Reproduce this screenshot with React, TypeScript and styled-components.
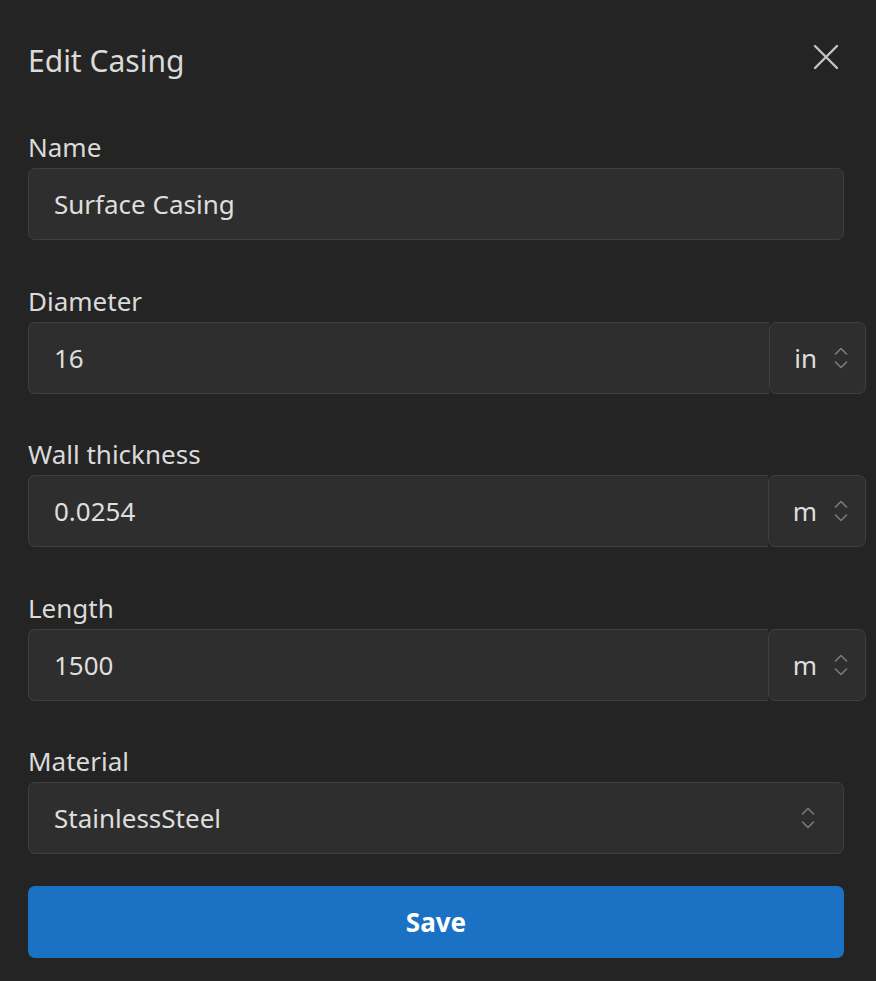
import React from "react";
import styled, { createGlobalStyle } from "styled-components";

const GlobalStyle = createGlobalStyle`
  html, body {
    margin: 0;
    background: #242424;
  }
  body {
    font-family: "Noto Sans", "Open Sans", sans-serif;
    color: #dcdcdc;
  }
`;

type Field = {
  label: string;
  value: string;
  unit?: string;
};

const fields: Field[] = [
  { label: "Name", value: "Surface Casing" },
  { label: "Diameter", value: "16", unit: "in" },
  { label: "Wall thickness", value: "0.0254", unit: "m" },
  { label: "Length", value: "1500", unit: "m" },
];

const UpDown = () => (
  <svg width="14" height="24" viewBox="0 0 14 24" fill="none">
    <path
      d="M1.5 8 L7 2.5 L12.5 8"
      stroke="currentColor"
      strokeWidth="1.6"
      strokeLinecap="round"
      strokeLinejoin="round"
    />
    <path
      d="M1.5 16 L7 21.5 L12.5 16"
      stroke="currentColor"
      strokeWidth="1.6"
      strokeLinecap="round"
      strokeLinejoin="round"
    />
  </svg>
);

const App = () => {
  return (
    <>
      <GlobalStyle />
      <Dialog>
        <Header>
          <Title>Edit Casing</Title>
          <CloseButton aria-label="Close">
            <svg width="26" height="26" viewBox="0 0 26 26" fill="none">
              <path
                d="M2 2 L24 24 M24 2 L2 24"
                stroke="currentColor"
                strokeWidth="2.4"
                strokeLinecap="round"
              />
            </svg>
          </CloseButton>
        </Header>

        <Form>
          {fields.map((f) => (
            <FieldBlock key={f.label}>
              <Label>{f.label}</Label>
              {f.unit ? (
                <UnitGroup>
                  <TextInput $joined readOnly value={f.value} />
                  <UnitBox>
                    <span>{f.unit}</span>
                    <Chevron>
                      <UpDown />
                    </Chevron>
                  </UnitBox>
                </UnitGroup>
              ) : (
                <TextInput readOnly value={f.value} />
              )}
            </FieldBlock>
          ))}

          <FieldBlock>
            <Label>Material</Label>
            <Select>
              <span>StainlessSteel</span>
              <Chevron>
                <UpDown />
              </Chevron>
            </Select>
          </FieldBlock>

          <SaveButton>Save</SaveButton>
        </Form>
      </Dialog>
    </>
  );
};

export default App;

const Dialog = styled.div`
  box-sizing: border-box;
  width: 876px;
  min-height: 981px;
  padding: 42px 32px 0 28px;
  background: #242424;
`;

const Header = styled.div`
  display: flex;
  align-items: center;
  justify-content: space-between;
  height: 38px;
`;

const Title = styled.h2`
  margin: 0;
  font-size: 30px;
  font-weight: 400;
  line-height: 38px;
  color: #dadada;
`;

const CloseButton = styled.button`
  display: flex;
  align-items: center;
  justify-content: center;
  margin-right: 5px;
  margin-top: -8px;
  padding: 0;
  border: none;
  background: none;
  color: #c4c4c4;
  cursor: pointer;
`;

const Form = styled.div`
  display: flex;
  flex-direction: column;
  gap: 43.5px;
  margin-top: 50px;
`;

const FieldBlock = styled.div`
  display: flex;
  flex-direction: column;
  gap: 4px;
`;

const Label = styled.label`
  font-size: 26px;
  line-height: 34px;
  color: #dadada;
`;

const TextInput = styled.input<{ $joined?: boolean }>`
  box-sizing: border-box;
  flex: ${(p) => (p.$joined ? "1 1 auto" : "none")};
  min-width: 0;
  width: 100%;
  height: 72px;
  padding: 0 25px;
  font: inherit;
  font-size: 26px;
  color: #dedede;
  background: #2e2e2e;
  border: 1.5px solid #3f3f3f;
  border-radius: ${(p) => (p.$joined ? "7px 0 0 7px" : "7px")};
  border-right-width: ${(p) => (p.$joined ? "0" : "1.5px")};
  outline: none;
`;

const UnitGroup = styled.div`
  display: flex;
  width: calc(100% + 22px);
`;

const UnitBox = styled.div`
  box-sizing: border-box;
  flex: none;
  display: flex;
  align-items: center;
  gap: 17px;
  height: 72px;
  padding: 0 17px 0 24px;
  font-size: 26px;
  color: #dedede;
  background: #2e2e2e;
  border: 1.5px solid #3f3f3f;
  border-radius: 7px;
`;

const Chevron = styled.span`
  display: flex;
  color: #7c7c7c;
`;

const Select = styled.div`
  box-sizing: border-box;
  display: flex;
  align-items: center;
  justify-content: space-between;
  height: 72px;
  padding: 0 28px 0 25px;
  font-size: 26px;
  color: #dedede;
  background: #2e2e2e;
  border: 1.5px solid #3f3f3f;
  border-radius: 7px;
`;

const SaveButton = styled.button`
  height: 72px;
  margin-top: -12px;
  border: none;
  border-radius: 7px;
  background: #1b71c3;
  color: #ffffff;
  font-family: inherit;
  font-size: 26px;
  font-weight: 700;
  cursor: pointer;
`;
